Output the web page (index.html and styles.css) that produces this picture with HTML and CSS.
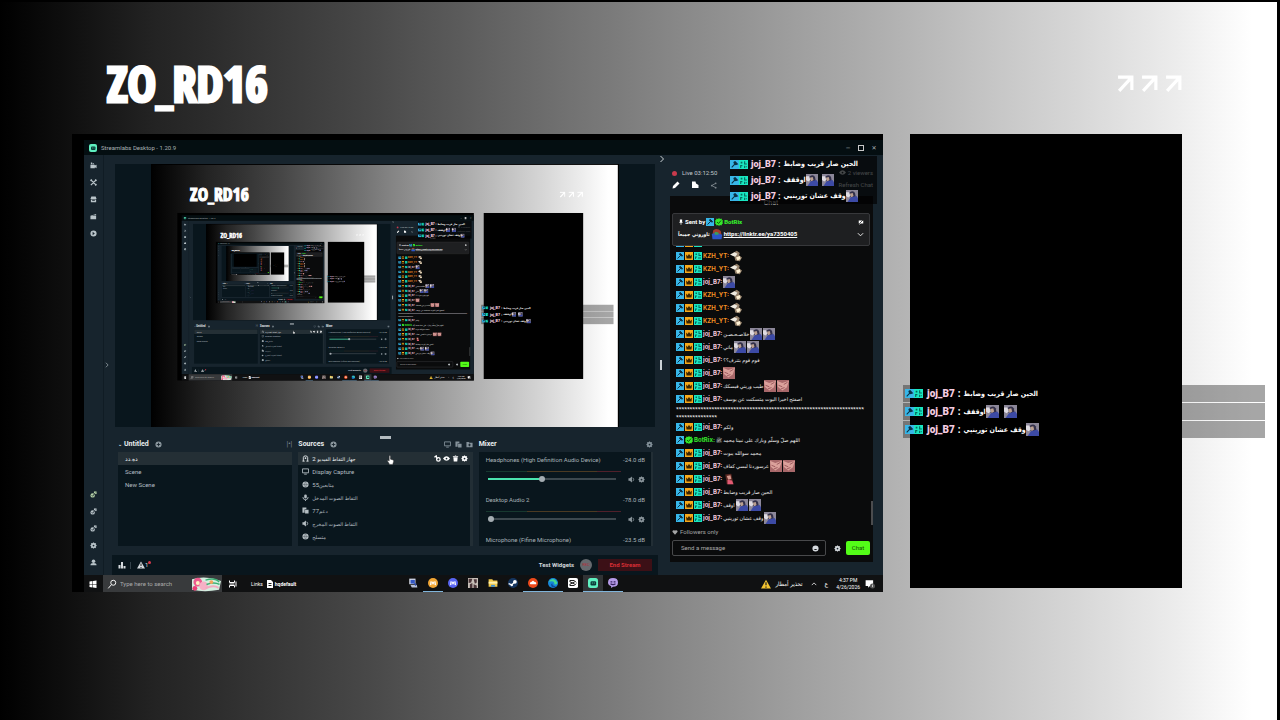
FILE: index.html
```html
<!DOCTYPE html>
<html lang="en">
<head>
<meta charset="utf-8">
<title>ZO_RD16</title>
<link rel="stylesheet" href="styles.css">
</head>
<body>
<svg class="defs" aria-hidden="true">
  <symbol id="mod" viewBox="0 0 16 16"><rect width="16" height="16" fill="#38b6e8"/><path d="M3 13l6-6M7 3l6 5M9 3l4 4-3 1-3-3z" stroke="#0b3145" stroke-width="2" fill="#0b3145"/></symbol>
  <symbol id="crown" viewBox="0 0 16 16"><rect width="16" height="16" fill="#f6a91c"/><path d="M2 5l3 3 3-4 3 4 3-3-1 8H3z" fill="#3a2400"/></symbol>
  <symbol id="sub" viewBox="0 0 16 16"><rect width="16" height="16" fill="#19e6c1"/><path d="M3 3h3v3H3zM9 2h2v4h3v2H9zM2 9h4v2H4v3H2zM9 10h2v4H9zM12 11h2v2h-2z" fill="#07695d"/></symbol>
  <symbol id="verified" viewBox="0 0 16 16"><path d="M8 0l2 2 3-1 1 3 2 1-1 3 1 3-2 1-1 3-3-1-2 2-2-2-3 1-1-3-2-1 1-3-1-3 2-1 1-3 3 1z" fill="#35e82b"/><path d="M4 8l3 3 5-6" stroke="#0b5a0a" stroke-width="2" fill="none"/></symbol>
  <symbol id="man" viewBox="0 0 16 16"><rect width="16" height="16" fill="#8c8799"/><path d="M5 3q5-3 7 1l1 5-5 2-4-3z" fill="#33304a"/><path d="M5 5l4-1 1 4-3 2z" fill="#bba091"/><path d="M2 16l4-6 8-2 2 3v5z" fill="#3c4aa5"/><path d="M0 3l4 0 2 5-3 2-3-2z" fill="#dfdbe2"/></symbol>
  <symbol id="hat" viewBox="0 0 16 16"><path d="M3 3q5-4 10 1l1 5H2z" fill="#a53b2c"/><path d="M1 8l6-2 8 3-1 6H2z" fill="#2c55c8"/><path d="M5 5l5 1v3H5z" fill="#3aa05a"/></symbol>
  <symbol id="face" viewBox="0 0 16 16"><rect width="16" height="16" fill="#a8686a"/><path d="M0 1l7 3 9-3-3 9-6 4-6-5z" fill="#dba19b"/><path d="M2 7l5 2M9 6l5-3M5 12l5-2" stroke="#8a444b" fill="none"/></symbol>
  <symbol id="girl" viewBox="0 0 16 16"><path d="M3 2l8-1 3 14H5z" fill="#5b2822"/><path d="M5 4l5-1 1 5-4 1z" fill="#d6988d"/><path d="M6 9l6 1 2 5H6z" fill="#e25a73"/></symbol>
  <symbol id="bird" viewBox="0 0 16 16"><path d="M4 4l5-3 4 3-1 3 4 3-3 5-6-1-1-5z" fill="#94806a"/><path d="M0 6l6-3 4 2-3 4-3-1z" fill="#eee9df"/><path d="M8 10l5-2 1 4-4 2z" fill="#fff2d5"/></symbol>
  <symbol id="gear" viewBox="0 0 16 16"><path d="M7 1h2l1 2 2-1 2 2-1 2 2 1v2l-2 1 1 2-2 2-2-1-1 2H7l-1-2-2 1-2-2 1-2-2-1V7l2-1-1-2 2-2 2 1z" fill="currentColor"/><circle cx="8" cy="8" r="2" fill="#17242d"/></symbol>
  <symbol id="plus" viewBox="0 0 16 16"><circle cx="8" cy="8" r="7" fill="currentColor"/><path d="M8 4v8M4 8h8" stroke="#17242d" stroke-width="2"/></symbol>
  <symbol id="globe" viewBox="0 0 16 16"><circle cx="8" cy="8" r="7" fill="currentColor"/><path d="M1 8h14M8 1q-5 7 0 14M8 1q5 7 0 14" stroke="#4a555b" fill="none"/></symbol>
  <symbol id="camera" viewBox="0 0 16 16"><path d="M1 6h10v2l4-2v8l-4-2v2H1zM2 1h3v4H2zM6 3h3v2H6z" fill="currentColor"/></symbol>
  <symbol id="tools" viewBox="0 0 16 16"><path d="M2 2l12 12M14 2L2 14M1 4l3-3M12 15l3-3M12 1l3 3" stroke="currentColor" stroke-width="3"/></symbol>
  <symbol id="shop" viewBox="0 0 16 16"><path d="M3 1h10l2 6H1zM2 8h12v6H2z" fill="currentColor"/><path d="M5 10h6" stroke="#17242d" stroke-width="2"/></symbol>
  <symbol id="clip" viewBox="0 0 16 16"><path d="M1 6l13-4v3H6v1h8v8H1z" fill="currentColor"/></symbol>
  <symbol id="play" viewBox="0 0 16 16"><circle cx="8" cy="8" r="7" fill="currentColor"/><path d="M6 4l5 4-5 4z" fill="#17242d"/></symbol>
  <symbol id="widget" viewBox="0 0 16 16"><circle cx="6" cy="10" r="5" fill="currentColor"/><path d="M9 1h6v6H9z" fill="currentColor"/><path d="M4 10l2 2 6-8" stroke="#17242d" stroke-width="2" fill="none"/></symbol>
  <symbol id="user" viewBox="0 0 16 16"><circle cx="8" cy="5" r="4" fill="currentColor"/><path d="M1 14q0-5 7-5t7 5z" fill="currentColor"/></symbol>
  <symbol id="screen" viewBox="0 0 16 16"><path d="M1 2h14v9H1zM5 14h6" stroke="currentColor" stroke-width="2" fill="none"/></symbol>
  <symbol id="webcam" viewBox="0 0 16 16"><path d="M3 14V6q0-4 5-4t5 4v8M1 14h5M10 14h5" stroke="currentColor" stroke-width="2" fill="none"/><circle cx="8" cy="7" r="2" fill="currentColor"/></symbol>
  <symbol id="mic" viewBox="0 0 16 16"><rect x="5" y="1" width="6" height="9" rx="3" fill="currentColor"/><path d="M2 7q0 6 6 6t6-6M8 13v3" stroke="currentColor" stroke-width="2" fill="none"/></symbol>
  <symbol id="copy" viewBox="0 0 16 16"><path d="M1 1h9v4H6v8H1zM7 6h8v9H7z" fill="currentColor"/></symbol>
  <symbol id="speaker" viewBox="0 0 16 16"><path d="M1 5h3l5-4v14l-5-4H1z" fill="currentColor"/><path d="M11 4q4 4 0 8" stroke="currentColor" stroke-width="2" fill="none"/></symbol>
  <symbol id="lock" viewBox="0 0 16 16"><circle cx="10" cy="10" r="4" stroke="currentColor" stroke-width="3" fill="none"/><path d="M7 9L5 2 1 5" stroke="currentColor" stroke-width="3" fill="none"/></symbol>
  <symbol id="eye" viewBox="0 0 16 16"><path d="M0 8q8-10 16 0-8 10-16 0z" fill="currentColor"/><circle cx="8" cy="8" r="2" fill="#17242d"/></symbol>
  <symbol id="chatoff" viewBox="0 0 16 16"><path d="M2 4h12v8H7l-4 3v-3H2z" fill="currentColor"/><path d="M3 13L14 2" stroke="#1e1f21" stroke-width="2"/></symbol>
  <symbol id="trash" viewBox="0 0 16 16"><path d="M2 2h4l1-1h2l1 1h4v2H2zM3 5h10l-1 10H4z" fill="currentColor"/></symbol>
  <symbol id="folder" viewBox="0 0 16 16"><path d="M1 2h5l2 2h7v10H1z" fill="currentColor"/><path d="M8 6v6M5 9h6" stroke="#17242d" stroke-width="2"/></symbol>
  <symbol id="pencil" viewBox="0 0 16 16"><path d="M1 15l1-5 9-9 4 4-9 9z" fill="currentColor"/></symbol>
  <symbol id="share" viewBox="0 0 16 16"><path d="M13 3L4 8l9 5" stroke="currentColor" stroke-width="2" fill="none"/><circle cx="13" cy="3" r="2" fill="currentColor"/><circle cx="4" cy="8" r="2" fill="currentColor"/><circle cx="13" cy="13" r="2" fill="currentColor"/></symbol>
  <symbol id="tag" viewBox="0 0 16 16"><path d="M2 1h7l1 4 5 3v6H2z" fill="currentColor"/></symbol>
  <symbol id="pin" viewBox="0 0 16 16"><path d="M5 1h6v6l2 3H9v5H7v-5H3l2-3z" fill="currentColor"/></symbol>
  <symbol id="down" viewBox="0 0 16 16"><path d="M2 5l6 6 6-6" stroke="currentColor" stroke-width="2" fill="none"/></symbol>
  <symbol id="up" viewBox="0 0 16 16"><path d="M2 11l6-6 6 6" stroke="currentColor" stroke-width="2" fill="none"/></symbol>
  <symbol id="right" viewBox="0 0 16 16"><path d="M5 2l6 6-6 6" stroke="currentColor" stroke-width="2" fill="none"/></symbol>
  <symbol id="smile" viewBox="0 0 16 16"><circle cx="8" cy="8" r="7" fill="currentColor"/><path d="M4 9q4 5 8 0z" fill="#111"/></symbol>
  <symbol id="bars" viewBox="0 0 16 16"><path d="M1 8h4v7H1zM6 2h4v13H6zM11 10h4v5h-4z" fill="currentColor"/></symbol>
  <symbol id="warn" viewBox="0 0 16 16"><path d="M8 1l8 14H0z" fill="currentColor"/><path d="M8 5v5M8 12v2" stroke="#222" stroke-width="2"/></symbol>
  <symbol id="heart" viewBox="0 0 16 16"><path d="M8 15L1 7q0-6 7-3 7-3 7 3z" fill="currentColor"/></symbol>
  <symbol id="arrow" viewBox="0 0 16 16"><path d="M1 2h13v12M14 2L2 15" stroke="#fff" stroke-width="3" fill="none"/></symbol>
  <symbol id="search" viewBox="0 0 16 16"><circle cx="10" cy="6" r="4" stroke="currentColor" stroke-width="1.5" fill="none"/><path d="M7 9l-5 6" stroke="currentColor" stroke-width="1.5"/></symbol>
  <symbol id="win" viewBox="0 0 16 16"><path d="M1 3l6-1v6H1zM8 2l7-1v7H8zM1 9h6v6l-6-1zM8 9h7v7l-7-1z" fill="#fff"/></symbol>
  <symbol id="slabs" viewBox="0 0 16 16"><rect width="16" height="16" rx="4" fill="#5ff0c0"/><rect x="4" y="5" width="9" height="7" rx="2" fill="#0b3b38"/><path d="M7 7v2M10 7v2" stroke="#5ff0c0"/></symbol>
  <symbol id="task" viewBox="0 0 16 16"><path d="M1 1v4h10V1M1 15v-4h10v4M1 8h10M14 3v10" stroke="currentColor" stroke-width="2" fill="none"/></symbol>
  <symbol id="doc" viewBox="0 0 16 16"><path d="M2 0h8l4 4v12H2z" fill="#fff"/><path d="M5 7h6M5 11h6" stroke="#222" stroke-width="2"/></symbol>
  <symbol id="pc" viewBox="0 0 16 16"><path d="M2 1h10v9H2z" fill="#d8dde8"/><path d="M4 3h7v6H4z" fill="#3357c4"/><path d="M4 11h10l1 4H6z" fill="#b9c2d8"/><path d="M9 8l5 1-2 4z" fill="#2e4cae"/></symbol>
  <symbol id="discord" viewBox="0 0 16 16"><circle cx="8" cy="8" r="8" fill="currentColor"/><path d="M3 12l1-7 3 1h2l3-1 1 7-3-2H6z" fill="#fff"/><circle cx="6" cy="8" r="1" fill="currentColor"/><circle cx="10" cy="8" r="1" fill="currentColor"/></symbol>
  <symbol id="game" viewBox="0 0 16 16"><rect width="16" height="16" fill="#c8bfb8"/><path d="M1 1h6l-2 6-4 1zM9 2h5v5l-3 2zM3 10l4-2v8H3zM9 10l5 2v4H9z" fill="#4a3538"/></symbol>
  <symbol id="files" viewBox="0 0 16 16"><path d="M1 2h6l1 2h7v10H1z" fill="#f2c94c"/><path d="M1 6h14v3H1z" fill="#fff1b0"/><path d="M5 11h6v3H5z" fill="#3c92d9"/></symbol>
  <symbol id="steam" viewBox="0 0 16 16"><circle cx="8" cy="8" r="8" fill="#15355f"/><path d="M1 9l5 2 5-5" stroke="#fff" stroke-width="2" fill="none"/><circle cx="11" cy="6" r="3" fill="#fff"/><circle cx="6" cy="11" r="2" fill="#fff"/></symbol>
  <symbol id="orange" viewBox="0 0 16 16"><circle cx="8" cy="8" r="8" fill="#ee4a1b"/><path d="M3 9q0-3 3-3 2-3 4 0 4 0 3 4H4z" fill="#fff"/></symbol>
  <symbol id="edge" viewBox="0 0 16 16"><circle cx="8" cy="8" r="8" fill="#1685d9"/><path d="M1 6q7-9 14 1 0 4-5 3 1-5-4-5-3 0-5 1z" fill="#45d98f"/><path d="M7 8q-1 5 6 5-8 5-8-3z" fill="#0c4b9b"/></symbol>
  <symbol id="cap" viewBox="0 0 16 16"><rect width="16" height="16" rx="3" fill="#fff"/><path d="M3 4h7l3 3M3 12h7l3-3M3 4v2l8 4M3 12v-2l8-4" stroke="#111" stroke-width="1.5" fill="none"/></symbol>
  <symbol id="purple" viewBox="0 0 16 16"><path d="M8 0q8 0 8 7t-8 7l-3 2v-3Q0 11 0 7q0-7 8-7z" fill="#b69be8"/><path d="M4 6h3M9 6h3M4 9q4 3 8 0" stroke="#35205d" stroke-width="2" fill="none"/></symbol>
  <symbol id="note" viewBox="0 0 16 16"><path d="M1 2h12v9H8l-3 3v-3H1z" fill="#fff"/><circle cx="12" cy="11" r="4" fill="#555"/><path d="M12 9v4" stroke="#fff"/></symbol>
  <symbol id="flower" viewBox="0 0 64 32"><path d="M2 6q30-8 60 4l-4 18q-30 6-56 0z" fill="#d4efe0"/><circle cx="14" cy="12" r="9" fill="#ed5a8e"/><circle cx="26" cy="20" r="9" fill="#f6b1c6"/><circle cx="14" cy="14" r="4" fill="#fff0c2"/><path d="M30 8q20-6 28 4M32 17q16-6 27 0" stroke="#3cae72" stroke-width="3" fill="none"/><path d="M30 25q16-8 27-1" stroke="#f3a9c0" stroke-width="4" fill="none"/><circle cx="42" cy="12" r="4" fill="#f5a35b"/><circle cx="8" cy="25" r="5" fill="#ec3d75"/></symbol>
  <symbol id="hand" viewBox="0 0 16 22"><path d="M5 1q3-1 3 2v6l6 2q2 1 1 4l-2 6H6l-5-8q1-3 4 0z" fill="#fff" stroke="#222"/></symbol>
</svg>

<div class="stage" id="stage">
  <header class="banner">
    <h1>ZO_RD16</h1>
    <div class="arrows"><svg><use href="#arrow"/></svg><svg><use href="#arrow"/></svg><svg><use href="#arrow"/></svg></div>
  </header>

  <main class="capture">
    <div class="titlebar">
      <svg class="ic8"><use href="#slabs"/></svg><span>Streamlabs Desktop - 1.20.9</span>
      <div class="winbtns"><button aria-label="Minimize">─</button><button aria-label="Maximize" class="max"></button><button aria-label="Close">✕</button></div>
    </div>

    <div class="app">
      <nav class="side">
        <svg><use href="#camera"/></svg><svg><use href="#tools"/></svg><svg><use href="#shop"/></svg><svg><use href="#clip"/></svg><svg><use href="#play"/></svg>
        <svg class="first"><use href="#widget"/></svg><svg><use href="#widget"/></svg><svg><use href="#widget"/></svg><svg><use href="#gear"/></svg><svg><use href="#user"/></svg>
      </nav>
      <div class="strip"><svg class="ic6"><use href="#right"/></svg></div>

      <section class="editor">
        <div class="preview"><div class="canvas"></div></div>
        <div class="panels">
          <section class="panel">
            <h2><span class="tiny">⌄</span>Untitled <svg class="ic7 gap"><use href="#plus"/></svg><span class="tools">|•|</span></h2>
            <ul class="list scenes"><li class="on">ده.دد</li><li>Scene</li><li>New Scene</li></ul>
          </section>
          <section class="panel sources">
            <i class="grip"></i>
            <h2>Sources <svg class="ic7 gap"><use href="#plus"/></svg><span class="tools"><svg class="ic7"><use href="#screen"/></svg><svg class="ic7"><use href="#copy"/></svg><svg class="ic7"><use href="#folder"/></svg></span></h2>
            <ul class="list">
              <li class="on"><svg><use href="#webcam"/></svg><span>2 <bdi>جهاز التقاط الفيديو</bdi></span><span class="acts"><svg><use href="#lock"/></svg><svg><use href="#eye"/></svg><svg><use href="#trash"/></svg><svg><use href="#gear"/></svg></span></li>
              <li><svg><use href="#screen"/></svg>Display Capture</li>
              <li><svg><use href="#globe"/></svg><span>55<bdi>متابعين</bdi></span></li>
              <li><svg><use href="#mic"/></svg><bdi>التقاط الصوت المدخل</bdi></li>
              <li><svg><use href="#copy"/></svg><span>77<bdi>دعم</bdi></span></li>
              <li><svg><use href="#speaker"/></svg><bdi>التقاط الصوت المخرج</bdi></li>
              <li><svg><use href="#globe"/></svg><bdi>متسلح</bdi></li>
            </ul>
            <svg class="cursor"><use href="#hand"/></svg>
          </section>
          <section class="panel">
            <h2>Mixer<span class="tools"><svg class="ic7"><use href="#gear"/></svg></span></h2>
            <div class="list mixer">
              <div class="ch"><p><span>Headphones (High Definition Audio Device)</span><span>-24.0 dB</span></p><i class="meter"></i><div class="vol"><input type="range" aria-label="Headphones volume" value="42" class="hi"><svg><use href="#speaker"/></svg><svg><use href="#gear"/></svg></div></div>
              <div class="ch"><p><span>Desktop Audio 2</span><span>-78.0 dB</span></p><i class="meter"></i><div class="vol"><input type="range" aria-label="Desktop audio volume" value="0"><svg><use href="#speaker"/></svg><svg><use href="#gear"/></svg></div></div>
              <div class="ch"><p><span>Microphone (Fifine Microphone)</span><span>-23.5 dB</span></p></div>
            </div>
          </section>
        </div>
        <footer class="foot">
          <svg class="ic8"><use href="#bars"/></svg><i class="sep"></i><svg class="ic8"><use href="#warn"/></svg><span>1</span><i class="dot"></i>
          <span class="tw">Test Widgets</span><button class="rec">REC</button><button class="end">End Stream</button>
        </footer>
      </section>

      <div class="divider"><svg class="ic8"><use href="#right"/></svg><i></i></div>

      <aside class="side-chat">
        <div class="live">
          <p><i class="red"></i><span>Live 03:12:50</span><span class="dim"><svg class="ic7"><use href="#eye"/></svg> 2 viewers</span></p>
          <p><svg class="ic8"><use href="#pencil"/></svg><svg class="ic8"><use href="#tag"/></svg><svg class="ic7 grey"><use href="#share"/></svg><span class="dim refresh">Refresh Chat</span></p>
        </div>
        <div class="chat">
          <p class="chat-title">Chat</p>
          <div class="pinned">
            <p><svg class="ic6"><use href="#pin"/></svg><span>Sent by</span><svg class="ic8"><use href="#mod"/></svg><svg class="ic8"><use href="#verified"/></svg><b class="bot">BotRix</b><svg class="ic6 end-ic"><use href="#chatoff"/></svg></p>
            <p><bdi>ثاوروني جميعاً</bdi><svg class="ic12"><use href="#hat"/></svg><a href="#chat">https://linktr.ee/ya7350405</a><svg class="ic7 end-ic"><use href="#down"/></svg></p>
          </div>
          <ul class="msgs"></ul>
          <i class="thumb"></i>
          <p class="follow"><svg class="ic6"><use href="#heart"/></svg>Followers only</p>
          <form class="send"><label><input type="text" aria-label="Send a message" placeholder="Send a message"><svg class="ic7"><use href="#smile"/></svg></label><svg class="ic7"><use href="#gear"/></svg><button type="button">Chat</button></form>
        </div>
      </aside>
    </div>

    <footer class="taskbar">
      <svg class="ic8 start"><use href="#win"/></svg>
      <label class="find"><svg class="ic10"><use href="#search"/></svg><input type="text" aria-label="Type here to search" placeholder="Type here to search"><svg class="flower"><use href="#flower"/></svg></label>
      <svg class="ic8 task"><use href="#task"/></svg><span class="links">Links</span><svg class="ic8"><use href="#doc"/></svg><span class="hq">hqdefault</span>
      <div class="apps">
        <span><svg><use href="#pc"/></svg></span><span class="run gold"><svg><use href="#discord"/></svg></span><span class="blue"><svg><use href="#discord"/></svg></span><span><svg><use href="#game"/></svg></span><span><svg><use href="#files"/></svg></span><span><svg><use href="#steam"/></svg></span><span class="run"><svg><use href="#orange"/></svg></span><span class="run"><svg><use href="#edge"/></svg></span><span><svg><use href="#cap"/></svg></span><span class="run active"><svg><use href="#slabs"/></svg></span><span class="run"><svg><use href="#purple"/></svg></span>
      </div>
      <div class="tray"><svg class="ic10 yellow"><use href="#warn"/></svg><bdi>تحذير أمطار</bdi><svg class="ic6 caret"><use href="#up"/></svg><span>ع</span><time>4:37 PM<br>4/26/2026</time><svg class="ic10"><use href="#note"/></svg></div>
    </footer>
    <div class="overlay small"></div>
  </main>

  <section class="phone"><div class="overlay big"></div></section>
</div>
<script src="script.js"></script>
</body>
</html>
```
FILE: styles.css
```css
* { box-sizing: border-box; }
body { margin: 0; background: #000; color: #d5dade; font-family: Roboto, "DejaVu Sans", sans-serif; font-size: 6px; line-height: 8px; }
p, h1, h2, ul { margin: 0; padding: 0; }
ul { list-style: none; }
button, input { font: inherit; border: 0; padding: 0; background: none; color: inherit; }
svg { flex: none; display: block; }
.defs { position: absolute; width: 0; height: 0; }
.ic6 { width: 6px; height: 6px; }
.ic7 { width: 7px; height: 7px; }
.ic8 { width: 8px; height: 8px; }
.ic10 { width: 10px; height: 10px; }
.ic12 { width: 12px; height: 12px; }

.stage {
  height: 100vh;
  min-height: 600px;
  display: grid;
  grid-template-columns: minmax(0, 72fr) minmax(0, 811fr) minmax(0, 27fr) minmax(0, 272fr) minmax(0, 95fr);
  grid-template-rows: 132px minmax(0, 1fr);
  padding-bottom: 128px;
  border-top: 2px solid #000;
  border-right: 3px solid #000;
  background: linear-gradient(90deg, #000 0%, #0e0e0e 5%, #232323 12%, #2b2b2b 16%, #464646 28%, #808080 50%, #b2b2b2 70%, #d6d6d6 84%, #ececec 92%, #fff 98%);
}
.banner { grid-column: 2 / 5; display: flex; justify-content: space-between; padding: 52px 0 0 35px; }
.banner h1 { font: 800 48px/60px "Open Sans Condensed", "Liberation Sans Narrow", "Roboto Condensed", sans-serif; color: #fff; -webkit-text-stroke: 3px #fff; }
.arrows { display: flex; gap: 7px; padding-top: 21px; }
.arrows svg { width: 17px; height: 17px; }

.capture { grid-column: 2; position: relative; display: flex; flex-direction: column; padding: 6px 0 0 12px; background: #000; min-width: 0; }
.titlebar { display: flex; align-items: center; height: 15px; padding: 0 6px 0 5px; gap: 4px; background: #040e11; color: #a9b0b3; }
.winbtns { margin-left: auto; display: flex; align-items: center; gap: 7px; }
.winbtns button { width: 6px; height: 6px; font-size: 6px; line-height: 6px; }
.winbtns .max { border: 1px solid #c8c8c8; }

.app { flex: 1; display: flex; min-height: 0; background: #17242d; }
.side { width: 19px; display: flex; flex-direction: column; align-items: center; gap: 10px; padding: 7px 0 9px; color: #b9c4c9; }
.side svg { width: 7px; height: 7px; }
.side .first { margin-top: auto; color: #b7d3a8; }
.strip { width: 9px; display: flex; align-items: center; border-left: 1px solid #101c24; color: #99a4aa; }
.editor { flex: 1; min-width: 0; display: flex; flex-direction: column; }
.preview { flex: 1; min-height: 0; margin: 9px 3px 0; display: flex; justify-content: center; background: #09161d; }
.canvas { position: relative; height: 100%; aspect-ratio: 16 / 9; overflow: hidden; background: #000; }
.mirror { position: absolute; top: 0; left: 0; width: 100vw; transform-origin: 0 0; }

.panels { display: grid; grid-template-columns: repeat(3, minmax(0, 1fr)); gap: 6px; padding: 9px 5px 9px 6px; }
.panel { position: relative; }
.panel h2 { display: flex; align-items: center; height: 16px; font-size: 7px; font-weight: bold; color: #e9edef; }
.tiny { width: 6px; font-size: 5px; }
.gap { margin-left: 6px; color: #8b979e; }
.tools { margin-left: auto; display: flex; gap: 4px; font-weight: normal; color: #84919a; }
.grip { position: absolute; top: 0; left: 82px; width: 11px; height: 3px; background: #b4bcc0; }
.list { height: 94px; overflow: hidden; background: #09161d; }
.list li { display: flex; align-items: center; gap: 3px; height: 13px; padding-left: 4px; color: #b4bdc2; }
.list li svg { width: 7px; height: 7px; }
.scenes li { padding-left: 7px; }
.list .on { background: #242f35; color: #e8ecee; }
.acts { margin-left: auto; padding-right: 2px; display: flex; gap: 2px; color: #fff; }
.sources .list { border-right: 3px solid #222e35; }
.cursor { position: absolute; top: 19px; left: 89px; width: 7px; height: 10px; }
.mixer { padding: 4px 6px 0 7px; border-right: 2px solid #222e35; }
.ch { height: 40px; }
.ch p { display: flex; justify-content: space-between; color: #aab4b9; }
.meter { display: block; height: 1px; margin: 7px 24px 3px 0; background: linear-gradient(90deg, #17382f 0 30%, #4c3a22 30% 82%, #50202a 82%); }
.vol { display: flex; align-items: center; gap: 3px; height: 8px; padding-left: 2px; color: #8b969c; }
.vol svg { width: 7px; height: 7px; }
.vol input { -webkit-appearance: none; appearance: none; flex: 1; min-width: 0; height: 2px; margin: 0 9px 0 0; background: #3d484e; }
.vol .hi { background: linear-gradient(90deg, #4be3ae 42%, #3d484e 42%); }
.vol input::-webkit-slider-thumb { -webkit-appearance: none; width: 6px; height: 6px; border-radius: 50%; background: #a5adb2; }
.foot { display: flex; align-items: center; height: 20px; padding: 0 6px; background: #09161d; color: #d5dade; }
.sep { width: 1px; height: 7px; margin: 0 6px 0 4px; background: #34424a; }
.dot { width: 3px; height: 3px; margin-bottom: 6px; border-radius: 50%; background: #d93a4e; }
.tw { margin-left: auto; font-weight: bold; }
.rec { width: 12px; height: 12px; margin: 0 6px; border-radius: 50%; background: #66696e; color: #b52d39; font-size: 4px; }
.end { width: 54px; height: 12px; background: #3c1016; color: #d62e35; font-weight: bold; }

.divider { width: 12px; position: relative; }
.divider svg { color: #ccd3d6; }
.divider i { position: absolute; left: 2px; top: 205px; width: 2px; height: 10px; background: #cbd3d7; }
.side-chat { width: 213px; display: flex; flex-direction: column; padding: 0 10px 13px 0; }
.live { height: 41px; padding: 12px 0 0 2px; }
.live p { display: flex; align-items: center; height: 12px; gap: 5px; color: #c1c8cc; }
.red { width: 5px; height: 5px; border-radius: 50%; background: #c83a4c; }
.live .dim { margin-left: auto; display: flex; color: #c3cacd; }
.live p svg { color: #fff; margin-right: 6px; }
.live .dim svg { color: #c3cacd; margin-right: 2px; }
.live .grey { color: #7d868b; }
.chat { position: relative; flex: 1; min-height: 0; display: flex; flex-direction: column; padding: 0 3px 6px 2px; background: #0a0b0c; }
.chat-title { height: 17px; padding-top: 3px; text-align: center; font-size: 7px; color: #aaa; }
.pinned { height: 33px; padding: 2px 5px; border: 1px solid #37383b; border-radius: 2px; background: #1e1f21; color: #fff; font-weight: bold; }
.pinned p { display: flex; align-items: center; gap: 1px; height: 12px; }
.pinned a { color: #fff; }
.bot { color: #35e82b; }
.end-ic { margin-left: auto; }
.msgs { flex: 1; min-height: 0; overflow: hidden; display: flex; flex-direction: column; justify-content: flex-end; padding: 0 0 3px 4px; }
.msgs li { flex: none; height: 13px; display: flex; align-items: center; gap: 1px; color: #f0f0f0; white-space: nowrap; }
.msgs li svg { width: 8px; height: 8px; }
.msgs li .emote { width: 12px; height: 12px; }
.msgs b { color: #f2c6dc; font-family: Inter, sans-serif; }
.msgs .KZH_YT { color: #f59123; }
.msgs .BotRix { color: #35e82b; }
.msgs .stars { display: block; height: 15px; width: 188px; font-weight: bold; white-space: normal; word-break: break-all; }
.msgs bdi, .list bdi, .pinned bdi { font-size: 5px; }
.pinned bdi, .tray bdi, .overlay bdi { font-family: "DejaVu Sans Condensed", "DejaVu Sans", sans-serif; }
.thumb { position: absolute; right: 0; bottom: 37px; width: 2px; height: 24px; background: #4b4c4e; }
.follow { display: flex; align-items: center; gap: 2px; height: 10px; margin-bottom: 3px; color: #a5a5a5; }
.send { display: flex; align-items: center; height: 16px; }
.send label { flex: 1; min-width: 0; height: 16px; display: flex; align-items: center; padding: 0 6px 0 8px; border: 1px solid #48494b; border-radius: 2px; }
.send input { flex: 1; min-width: 0; }
.send > svg { margin: 0 5px 0 8px; }
.send input::placeholder, .find input::placeholder { color: #aaa; opacity: 1; }
.send button { width: 24px; height: 14px; border-radius: 2px; background: #53fc18; color: #174d08; }

.taskbar { display: flex; align-items: center; height: 17px; background: #101112; color: #fff; }
.start { margin: 0 6px 0 5px; }
.find { display: flex; align-items: center; gap: 3px; width: 119px; height: 17px; padding-left: 4px; background: #383a3c; }
.find input { flex: 1; min-width: 0; }
.flower { width: 31px; height: 16px; }
.task { margin: 0 14px 0 7px; }
.links { margin-right: 3px; font-size: 5px; }
.hq { margin-left: 1px; font-size: 5px; font-weight: bold; }
.apps { display: flex; height: 17px; margin-left: auto; }
.apps span { width: 20px; display: grid; place-items: center; border-bottom: 1px solid transparent; }
.apps svg { width: 10px; height: 10px; }
.apps .run { border-color: #7fb4da; }
.apps .active { background: #303335; }
.gold { color: #f2a735; }
.blue { color: #5865f2; }
.tray { display: flex; align-items: center; gap: 5px; margin-left: 138px; padding-right: 8px; }
.caret { margin: 0 3px; }
.tray time { margin-left: 3px; font-size: 5px; line-height: 7px; text-align: center; }
.yellow { color: #f4c430; }

.overlay { position: absolute; display: flex; flex-direction: column; color: #fff; font-weight: bold; }
.overlay p { display: flex; align-items: center; background: rgba(0, 0, 0, .35); white-space: nowrap; }
.overlay b { color: #f5cce0; }
.overlay bdi { margin-left: 3px; }
.small { top: 22px; right: 6px; width: 147px; }
.small p { height: 16px; background: rgba(0, 0, 0, .65); font-size: 9px; }
.small bdi { font-size: 7px; }
.small svg { width: 9px; height: 9px; }
.small b { margin: 0 2px 0 3px; }
.small .emote { width: 12px; height: 12px; margin-right: 4px; }
.phone { grid-column: 4; position: relative; margin-bottom: 4px; background: #000; }
.big { top: 251px; left: -7px; width: 362px; gap: 1px; }
.big p { height: 17px; padding-left: 2px; font-size: 10px; }
.big bdi { font-size: 7px; }
.big svg { width: 9px; height: 9px; }
.big b { margin: 0 3px 0 4px; }
.big .emote { width: 13px; height: 13px; margin-right: 5px; }
```
FILE: script.js
```js
const use = (id, cls = '') => `<svg class="${cls}"><use href="#${id}"/></svg>`;
const emotes = (ids) => ids.map((id) => use(id, 'emote')).join('');

const overlayLines = [
  ['الحين صار قريب وضابط', []],
  ['اوقفف', ['man', 'man']],
  ['وقف عشان تورينيي', ['man']],
];
document.querySelectorAll('.overlay').forEach((box) => {
  box.innerHTML = overlayLines.map(([text, pics]) =>
    `<p>${use('mod')}${use('sub')}<b>joj_B7</b>:<bdi>${text}</bdi>${emotes(pics)}</p>`).join('');
});

const messages = [
  ['KZH_YT', '', ['bird']], ['KZH_YT', '', ['bird']],
  ['joj_B7', '', ['man']],
  ['KZH_YT', '', ['bird']], ['KZH_YT', '', ['bird']], ['KZH_YT', '', ['bird']],
  ['joj_B7', 'خلاصـحـصـن', ['man', 'man']],
  ['joj_B7', 'ماني', ['man', 'man']],
  ['joj_B7', 'فوم فوم بتنرف؟؟', []],
  ['joj_B7', '', ['face']],
  ['joj_B7', 'طيب وريني فيسكك', ['face', 'face']],
  ['joj_B7', 'اصفتح اخيرا اليوت متسكنت عن يوسف', []],
  null,
  ['joj_B7', 'ولكم', []],
  ['BotRix', 'اللهم صلّ وسلّم وبارك على نبينا محمد ﷺ', []],
  ['joj_B7', 'محمد سوالله يبوت', []],
  ['joj_B7', 'عرسوردنا لبسي كفاف', ['face', 'face']],
  ['joj_B7', '', ['girl']],
  ['joj_B7', 'الحين صار قريب وضابط', []],
  ['joj_B7', 'اوقف', ['man', 'man']],
  ['joj_B7', 'وقف عشان تورينيي', ['man']],
];
// The oldest line has scrolled half under the pinned card: only its badges show.
const scrolled = `<li>${use('mod')}${use('crown')}${use('sub')}</li>`;
document.querySelector('.msgs').innerHTML = scrolled + messages.map((m) => {
  if (!m) return `<li class="stars">${'*'.repeat(84)}</li>`;
  const [name, text, pics] = m;
  const badges = name === 'BotRix' ? ['mod', 'verified'] : ['mod', 'crown', 'sub'];
  return `<li>${badges.map((b) => use(b)).join('')}<b class="${name}">${name}:</b>${text ? `<bdi>${text}</bdi>` : ''}${emotes(pics)}</li>`;
}).join('');

// The preview shows the live scene, so each level contains a scaled copy of it.
const stage = document.getElementById('stage');
const canvas = stage.querySelector('.canvas');
const scale = canvas.clientWidth / window.innerWidth;
const template = stage.cloneNode(true);
let target = canvas;
for (let depth = 0; depth < 3; depth += 1) {
  const copy = template.cloneNode(true);
  copy.removeAttribute('id');
  copy.classList.add('mirror');
  copy.setAttribute('aria-hidden', 'true');
  copy.inert = true;
  copy.style.transform = `scale(${scale})`;
  target.append(copy);
  target = copy.querySelector('.canvas');
}
```
